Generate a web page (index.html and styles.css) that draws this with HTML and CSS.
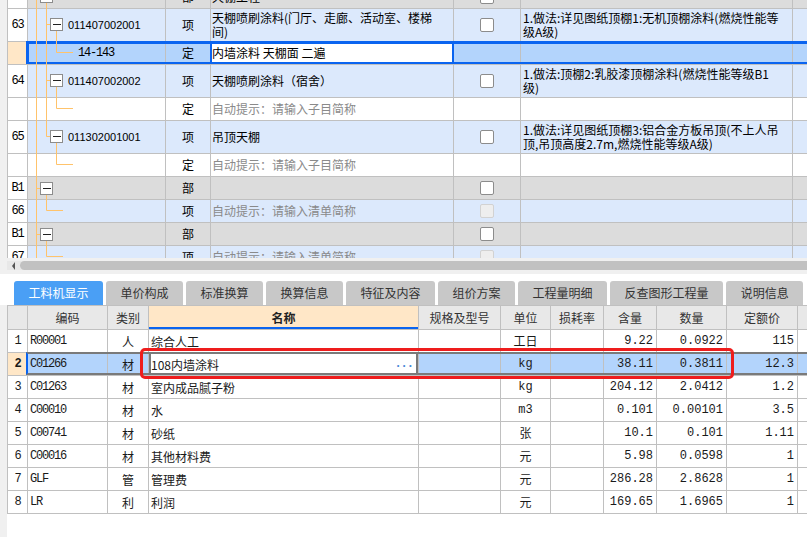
FILE: index.html
```html
<!DOCTYPE html>
<html lang="zh-CN">
<head>
<meta charset="utf-8">
<title>工料机显示</title>
<link rel="stylesheet" href="styles.css">
</head>
<body>
<div class="top-pane">
  <div class="top-grid">
    <div class="trow gry">
      <div class="n">B1</div><div class="t"></div><div class="k">部</div><div class="nm">天棚工程</div><div class="ck"><span class="cb"></span></div><div class="d"></div><div class="x"></div>
    </div>
    <div class="trow tall blue">
      <div class="n">63</div><div class="t code">011407002001</div><div class="k">项</div><div class="nm"><span>天棚喷刷涂料(门厅、走廊、活动室、楼梯<br>间)</span></div><div class="ck"><span class="cb"></span></div><div class="d"><span>1.做法:详见图纸顶棚1:无机顶棚涂料(燃烧性能等<br>级A级)</span></div><div class="x"></div>
    </div>
    <div class="trow sel">
      <div class="n"></div><div class="t sub">14-143</div><div class="k">定</div><div class="nm">内墙涂料 天棚面 二遍</div><div class="ck"></div><div class="d"></div><div class="x"></div>
    </div>
    <div class="trow tall blue">
      <div class="n">64</div><div class="t code">011407002002</div><div class="k">项</div><div class="nm">天棚喷刷涂料（宿舍）</div><div class="ck"><span class="cb"></span></div><div class="d"><span>1.做法:顶棚2:乳胶漆顶棚涂料(燃烧性能等级B1<br>级)</span></div><div class="x"></div>
    </div>
    <div class="trow wht">
      <div class="n"></div><div class="t"></div><div class="k">定</div><div class="nm hint">自动提示：请输入子目简称</div><div class="ck"></div><div class="d"></div><div class="x"></div>
    </div>
    <div class="trow tall blue">
      <div class="n">65</div><div class="t code">011302001001</div><div class="k">项</div><div class="nm">吊顶天棚</div><div class="ck"><span class="cb"></span></div><div class="d"><span>1.做法:详见图纸顶棚3:铝合金方板吊顶(不上人吊<br>顶,吊顶高度2.7m,燃烧性能等级A级)</span></div><div class="x"></div>
    </div>
    <div class="trow wht">
      <div class="n"></div><div class="t"></div><div class="k">定</div><div class="nm hint">自动提示：请输入子目简称</div><div class="ck"></div><div class="d"></div><div class="x"></div>
    </div>
    <div class="trow gry">
      <div class="n">B1</div><div class="t"></div><div class="k">部</div><div class="nm"></div><div class="ck"><span class="cb"></span></div><div class="d"></div><div class="x"></div>
    </div>
    <div class="trow blue">
      <div class="n">66</div><div class="t"></div><div class="k">项</div><div class="nm hint">自动提示：请输入清单简称</div><div class="ck"><span class="cb dis"></span></div><div class="d"></div><div class="x"></div>
    </div>
    <div class="trow gry">
      <div class="n">B1</div><div class="t"></div><div class="k">部</div><div class="nm"></div><div class="ck"><span class="cb"></span></div><div class="d"></div><div class="x"></div>
    </div>
    <div class="trow blue">
      <div class="n">67</div><div class="t"></div><div class="k">项</div><div class="nm hint">自动提示：请输入清单简称</div><div class="ck"><span class="cb dis"></span></div><div class="d"></div><div class="x"></div>
    </div>
  </div>
  <svg class="tree-lines" width="807" height="258" viewBox="0 0 807 258">
    <g stroke="#ffc36b" stroke-width="1" fill="none">
      <path d="M36.5 0V258"/>
      <path d="M46.5 2V136.5"/>
      <path d="M46.5 24.5H51M46.5 80.5H51M46.5 136.5H51"/>
      <path d="M56.5 30V52.5H73M56.5 86V108.5H73M56.5 142V164.5H73"/>
      <path d="M36.5 188.5H41M36.5 234.5H41"/>
      <path d="M46.5 194V210.5H63M46.5 240V256.5H63"/>
    </g>
    <g fill="#fff" stroke="#8c8c8c" stroke-width="1">
      <rect x="40.5" y="-9.5" width="12" height="12"/>
      <rect x="50.5" y="18.5" width="12" height="12"/>
      <rect x="50.5" y="74.5" width="12" height="12"/>
      <rect x="50.5" y="130.5" width="12" height="12"/>
      <rect x="40.5" y="182.5" width="12" height="12"/>
      <rect x="40.5" y="228.5" width="12" height="12"/>
    </g>
    <g stroke="#222" stroke-width="1">
      <path d="M53 24.5H61M53 80.5H61M53 136.5H61M43 188.5H51M43 234.5H51"/>
    </g>
  </svg>
</div>

<div class="hscroll">
  <div class="track">
    <span class="arrow"></span>
    <span class="thumb"></span>
  </div>
</div>

<div class="tabs">
  <div class="tab active">工料机显示</div>
  <div class="tab">单价构成</div>
  <div class="tab">标准换算</div>
  <div class="tab">换算信息</div>
  <div class="tab">特征及内容</div>
  <div class="tab">组价方案</div>
  <div class="tab">工程量明细</div>
  <div class="tab">反查图形工程量</div>
  <div class="tab">说明信息</div>
</div>

<div class="bottom-pane">
  <div class="bottom-grid">
    <div class="brow head">
      <div></div><div class="hc">编码</div><div class="hc">类别</div><div class="hc hname">名称</div><div class="hc">规格及型号</div><div class="hc">单位</div><div class="hc">损耗率</div><div class="hc">含量</div><div class="hc">数量</div><div class="hc">定额价</div><div></div>
    </div>
    <div class="brow">
      <div class="bn">1</div><div class="cd">R00001</div><div class="k">人</div><div class="bname">综合人工</div><div></div><div class="u">工日</div><div></div><div class="r">9.22</div><div class="r">0.0922</div><div class="r">115</div><div></div>
    </div>
    <div class="brow bsel">
      <div class="bn">2</div><div class="cd">C01266</div><div class="k">材</div><div class="bname edit"><span>108内墙涂料</span><span class="dots">...</span></div><div></div><div class="u">kg</div><div></div><div class="r">38.11</div><div class="r">0.3811</div><div class="r">12.3</div><div></div>
    </div>
    <div class="brow">
      <div class="bn">3</div><div class="cd">C01263</div><div class="k">材</div><div class="bname">室内成品腻子粉</div><div></div><div class="u">kg</div><div></div><div class="r">204.12</div><div class="r">2.0412</div><div class="r">1.2</div><div></div>
    </div>
    <div class="brow">
      <div class="bn">4</div><div class="cd">C00010</div><div class="k">材</div><div class="bname">水</div><div></div><div class="u">m3</div><div></div><div class="r">0.101</div><div class="r">0.00101</div><div class="r">3.5</div><div></div>
    </div>
    <div class="brow">
      <div class="bn">5</div><div class="cd">C00741</div><div class="k">材</div><div class="bname">砂纸</div><div></div><div class="u">张</div><div></div><div class="r">10.1</div><div class="r">0.101</div><div class="r">1.11</div><div></div>
    </div>
    <div class="brow">
      <div class="bn">6</div><div class="cd">C00016</div><div class="k">材</div><div class="bname">其他材料费</div><div></div><div class="u">元</div><div></div><div class="r">5.98</div><div class="r">0.0598</div><div class="r">1</div><div></div>
    </div>
    <div class="brow">
      <div class="bn">7</div><div class="cd">GLF</div><div class="k">管</div><div class="bname">管理费</div><div></div><div class="u">元</div><div></div><div class="r">286.28</div><div class="r">2.8628</div><div class="r">1</div><div></div>
    </div>
    <div class="brow">
      <div class="bn">8</div><div class="cd">LR</div><div class="k">利</div><div class="bname">利润</div><div></div><div class="u">元</div><div></div><div class="r">169.65</div><div class="r">1.6965</div><div class="r">1</div><div></div>
    </div>
  </div>
  <div class="annot"></div>
</div>
</body>
</html>
```

FILE: styles.css
```css
* { box-sizing: border-box; }

body {
  margin: 0;
  width: 807px;
  height: 537px;
  overflow: hidden;
  background: #fff;
  color: #000;
  font-family: "Noto Sans CJK SC", "Liberation Sans", sans-serif;
  font-size: 12px;
}

/* ---------- top tree grid ---------- */
.top-pane {
  position: relative;
  height: 258px;
  overflow: hidden;
  background: #f0f0f0;
  padding-left: 7px;
}

.top-grid { margin-top: -14px; }

.trow {
  position: relative;
  display: grid;
  grid-template-columns: 20px 138px 45px 243px 67px 272px 1fr;
  height: 23px;
  border-left: 1px solid #c0c0c0;
  border-bottom: 1px solid #c0c0c0;
}
.trow.tall { height: 33px; }

.trow > div {
  display: flex;
  align-items: center;
  overflow: hidden;
  white-space: nowrap;
  line-height: 14px;
  border-right: 1px solid #c0c0c0;
}
.trow > div.x { border-right: none; }

.blue { background: #dce9fc; }
.wht { background: #fff; }
.gry { background: #dcdcdc; }

.trow .n {
  background: #fff;
  justify-content: center;
  font-family: "Liberation Mono", monospace;
  letter-spacing: -1.2px;
}
.trow .k { justify-content: center; }
.trow .nm { padding-left: 1px; }
.trow .ck { justify-content: center; }
.trow .d { padding-left: 2px; }

.trow .code {
  padding-left: 40px;
  font-family: "Liberation Sans", sans-serif;
  font-size: 11px;
}
.trow .sub {
  padding-left: 50px;
  font-family: "Liberation Mono", monospace;
  letter-spacing: -1.2px;
}
.hint { color: #8a8a8a; }

.cb {
  display: block;
  width: 14px;
  height: 14px;
  border: 1px solid #8c8c8c;
  border-radius: 2px;
  background: #fff;
}
.cb.dis {
  background: #eeeeee;
  border-color: #d2d2d2;
}

/* selected row */
.trow.sel { background: #b3d4fc; }
.trow.sel .n { background: #ffe7c7; }
.trow.sel .k { border-right-color: #0a64f0; }
.trow.sel .nm {
  background: #fff;
  border-right: 1px solid #0a64f0;
  box-shadow: inset 1px 0 0 #0a64f0, inset -1px 0 0 #0a64f0;
}
.trow.sel::after {
  content: "";
  position: absolute;
  left: 18px;
  right: 0;
  top: -1px;
  bottom: 0;
  border-top: 3px solid #0a64f0;
  border-bottom: 2px solid #0a64f0;
  border-left: 3px solid #0a64f0;
  pointer-events: none;
}

.tree-lines {
  position: absolute;
  left: 0;
  top: 0;
  z-index: 5;
  pointer-events: none;
}

/* ---------- horizontal scrollbar ---------- */
.hscroll {
  height: 16px;
  padding: 3px 0 4px 7px;
  background: #f0f0f0;
}
.track {
  display: flex;
  align-items: center;
  height: 100%;
  background: #e8e8e8;
}
.arrow {
  width: 0;
  height: 0;
  margin: 0 5px 0 5px;
  border-top: 4px solid transparent;
  border-bottom: 4px solid transparent;
  border-right: 3px solid #555;
}
.thumb {
  flex: 1;
  height: 100%;
  background: #c1c1c1;
  border-radius: 5px 0 0 5px;
}

/* ---------- tabs ---------- */
.tabs {
  display: flex;
  gap: 3px;
  height: 31px;
  padding: 7px 0 0 14px;
  background: #fff;
}
.tab {
  height: 24px;
  line-height: 24px;
  padding: 0 14.5px;
  background: #c8c8c8;
  color: #333;
  border-radius: 3px 3px 0 0;
  white-space: nowrap;
}
.tab.active {
  background: #4a9ff5;
  color: #fff;
}

/* ---------- bottom grid ---------- */
.bottom-pane {
  position: relative;
  height: 232px;
  background: #f0f0f0;
  padding-left: 7px;
}
.bottom-grid {
  height: 100%;
  background: #fff;
}
.brow {
  position: relative;
  display: grid;
  grid-template-columns: 20px 80px 41px 270px 82px 50px 53px 53px 70px 71px 1fr;
  height: 23px;
  border-left: 1px solid #c0c0c0;
  border-bottom: 1px solid #c0c0c0;
  color: #1a1a1a;
}
.brow > div {
  display: flex;
  align-items: center;
  overflow: hidden;
  white-space: nowrap;
  border-right: 1px solid #c0c0c0;
}
.brow > div:last-child { border-right: none; }

.brow.head {
  height: 25px;
  border-top: 1px solid #c0c0c0;
  background: #e8e8e8;
  color: #333;
}
.brow .hc { justify-content: center; }
.brow .hname {
  background: #ffe7c7;
  font-weight: bold;
  color: #222;
  box-shadow: inset 0 -2px 0 #0a64f0;
}

.brow .bn {
  justify-content: center;
  font-family: "Liberation Mono", monospace;
  letter-spacing: -1.2px;
}
.brow .cd {
  padding-left: 2px;
  font-family: "Liberation Mono", monospace;
  letter-spacing: -1.2px;
}
.brow .k { justify-content: center; }
.brow .bname { padding-left: 2px; }
.brow .u {
  justify-content: center;
  font-family: "Liberation Mono", "Noto Sans CJK SC", monospace;
}
.brow .r {
  justify-content: flex-end;
  padding-right: 3px;
  font-family: "Liberation Mono", monospace;
}

/* selected bottom row */
.brow.bsel { background: #b3d4fc; }
.brow.bsel .bn {
  background: #ffe7c7;
  font-weight: bold;
}
.brow.bsel .edit {
  justify-content: space-between;
  padding-right: 5px;
  background: #fff;
  box-shadow: inset 2px 0 0 #7a7a7a, inset -2px 0 0 #7a7a7a;
}
.dots {
  color: #4a8ad8;
  font-family: "Liberation Mono", monospace;
  font-weight: bold;
  letter-spacing: -1px;
}
.brow.bsel::after {
  content: "";
  position: absolute;
  left: 18px;
  right: 0;
  top: -1px;
  bottom: 0;
  border-top: 2px solid #7a7a7a;
  border-bottom: 2px solid #7a7a7a;
  border-left: 2px solid #0a64f0;
  pointer-events: none;
}

.annot {
  position: absolute;
  left: 140px;
  top: 43px;
  width: 594px;
  height: 31px;
  border: 3px solid #ee1d1d;
  border-radius: 5px;
  pointer-events: none;
}
```
